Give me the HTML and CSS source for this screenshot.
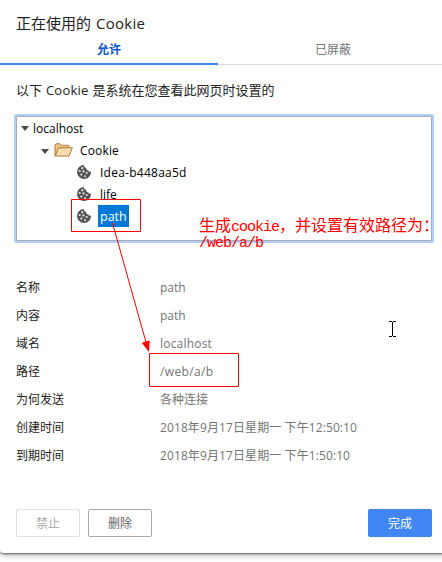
FILE: index.html
```html
<!DOCTYPE html>
<html lang="zh-CN">
<head>
<meta charset="utf-8">
<title>正在使用的 Cookie</title>
<link rel="stylesheet" href="styles.css">
</head>
<body>
<svg class="defs" width="0" height="0" aria-hidden="true">
  <symbol id="cookie" viewBox="0 0 14 14">
    <path fill="#555" d="M7 0A2.600 2.600 0 0 0 9.300 3 2.200 2.200 0 0 0 11.300 5.500 2 2 0 0 0 14 6.600 7 7 0 1 1 7 0Z"/>
    <g fill="#e4e4e4"><circle cx="5.300" cy="3.200" r="1.100"/><circle cx="2.700" cy="6" r="1.100"/><circle cx="6.500" cy="6.400" r="1.100"/><circle cx="4.300" cy="9.500" r="1.100"/><circle cx="9.700" cy="8" r="1.100"/><circle cx="8" cy="11.200" r="1"/></g>
  </symbol>
</svg>
<main class="dialog">
  <h1 class="title">正在使用的 <span class="title-latin">Cookie</span></h1>
  <nav class="tabs">
    <div class="tab active"><span>允许</span></div>
    <div class="tab"><span>已屏蔽</span></div>
  </nav>
  <p class="intro">以下 <span class="intro-latin">Cookie</span> 是系统在您查看此网页时设置的</p>
  <div class="tree">
    <div class="node level0"><i class="twisty"></i><span>localhost</span></div>
    <div class="node level1"><i class="twisty"></i>
      <svg class="folder" width="19" height="14" viewBox="0 0 19 14"><path d="M1 12.500V2L2.200.8h4L7.500 2.300h6.800l.8 1V5" fill="#efc78c" stroke="#a9793f"/><path d="M1.200 13 4.600 4.800h13.700L15 13Z" fill="#fbdda9" stroke="#a9793f"/></svg>
      <span class="t-cookie">Cookie</span></div>
    <div class="node level2"><svg class="cookie" width="14" height="14"><use href="#cookie"/></svg><span class="label t-idea">Idea-b448aa5d</span></div>
    <div class="node level2"><svg class="cookie" width="14" height="14"><use href="#cookie"/></svg><span class="label">life</span></div>
    <div class="node level2"><svg class="cookie" width="14" height="14"><use href="#cookie"/></svg><span class="label selected">path</span></div>
  </div>
  <dl class="details">
    <dt>名称</dt><dd>path</dd>
    <dt>内容</dt><dd>path</dd>
    <dt>域名</dt><dd class="v-host">localhost</dd>
    <dt>路径</dt><dd class="v-web">/web/a/b</dd>
    <dt>为何发送</dt><dd>各种连接</dd>
    <dt>创建时间</dt><dd class="v-date">2018年9月17日星期一 下午12:50:10</dd>
    <dt>到期时间</dt><dd class="v-date">2018年9月17日星期一 下午1:50:10</dd>
  </dl>
  <footer class="actions">
    <button class="btn disabled">禁止</button>
    <button class="btn">删除</button>
    <button class="btn primary">完成</button>
  </footer>
</main>
<svg class="marks" width="442" height="562" viewBox="0 0 442 562" aria-hidden="true">
  <g fill="none" stroke="#f00"><path d="M71.500 199.500h69v32h-69Z"/><path d="M149.500 353.500h89v33h-89Z"/><path d="M112.500 223 146.500 344"/></g>
  <path fill="#f00" d="m149 352-7.300-9.300 8-2.300Z"/>
  <path d="M389 321.500h3m1 0h3M392.500 322v14M389 336.500h3m1 0h3" stroke="#000" fill="none"/>
</svg>
<div class="note"><div>生成<span class="mono">cookie</span>，并设置有效路径为：</div><div class="mono">/web/a/b</div></div>
</body>
</html>
```
FILE: styles.css
```css
* { box-sizing: border-box; }
body {
  margin: 0;
  width: 442px;
  height: 562px;
  overflow: hidden;
  background: #fff;
  color: #222;
  font: 12px/22px "Open Sans", "Noto Sans CJK SC", sans-serif;
  white-space: nowrap;
}
.defs { display: block; }
.dialog {
  display: flex;
  flex-direction: column;
  width: 446px;
  height: 553px;
  background: #fff;
  border-radius: 0 0 0 3px;
  box-shadow: 0 1px 2px rgba(0,0,0,.5), 0 2px 6px rgba(0,0,0,.3);
}
.title { margin: 0; height: 36px; padding: 12px 16px 0; font-size: 15px; font-weight: 400; line-height: 22px; word-spacing: 1px; }
.title-latin { letter-spacing: .3px; }
.tabs { display: flex; height: 29px; }
.tab { flex: 0 0 218px; height: 29px; text-align: center; color: #757575; line-height: 27px; border-bottom: 1px solid #d9dbdf; }
.tab + .tab { flex: 1; padding-left: 2px; }
.tab.active { color: #1155cc; font-weight: 700; border-bottom: 2px solid #4285f4; }
.intro { margin: 14px 16px 0; height: 22px; font-size: 13px; line-height: 22px; word-spacing: .5px; }
.intro-latin { letter-spacing: .25px; }
.tree {
  height: 125px;
  width: 416px;
  margin: 15px 0 0 16px;
  padding: 1px 0 0 4px;
  border: 1px solid #a5adb8;
  border-radius: 1px;
  box-shadow: 0 0 0 2px #b0ccfb;
  color: #000;
}
.node { display: flex; align-items: center; height: 22px; }
.level0 .twisty { position: relative; top: -1px; }
.level1 { padding-left: 20px; }
.level2 { padding-left: 56px; }
.twisty { width: 8px; margin-right: 4px; border: 4px solid transparent; border-top: 5px solid #4b4b4b; border-bottom: 0; }
.folder { margin: 0 7px 0 1px; position: relative; top: -1px; }
.cookie { margin-right: 7px; position: relative; top: -1px; }
.label { padding: 0 2px; height: 22px; }
.t-cookie { letter-spacing: .15px; }
.t-idea { letter-spacing: .25px; }
.selected { background: #0078d7; color: #fff; width: 31px; font-size: 12.500px; line-height: 24px; position: relative; top: -1px; }
.details {
  display: grid;
  grid-template-columns: 144px 1fr;
  grid-auto-rows: 28px;
  margin: 33px 0 0 16px;
  line-height: 28px;
}
.details dd { margin: 0; color: #757575; }
.details .v-host { letter-spacing: .2px; }
.details .v-web { letter-spacing: .35px; }
.details .v-date { letter-spacing: .1px; }
.actions { display: flex; gap: 8px; margin: 39px 14px 0 16px; }
.btn {
  width: 64px;
  height: 28px;
  padding: 0;
  border: 1px solid #aaa;
  border-radius: 2px;
  background: #fff;
  color: #666;
  font: 12px/26px "Noto Sans CJK SC", sans-serif;
}
.btn.disabled { color: #aaa; border-color: #e0e0e0; }
.btn.primary { margin-left: auto; background: #4285f4; border-color: #4285f4; color: #fff; }
.marks { position: absolute; left: 0; top: 0; }
.note {
  position: absolute;
  left: 199px;
  top: 216px;
  color: #f00;
  font: 16px/16px "Noto Sans CJK SC", sans-serif;
}
.note .mono { font-family: "Liberation Mono", monospace; font-size: 15px; letter-spacing: -1px; }
```
